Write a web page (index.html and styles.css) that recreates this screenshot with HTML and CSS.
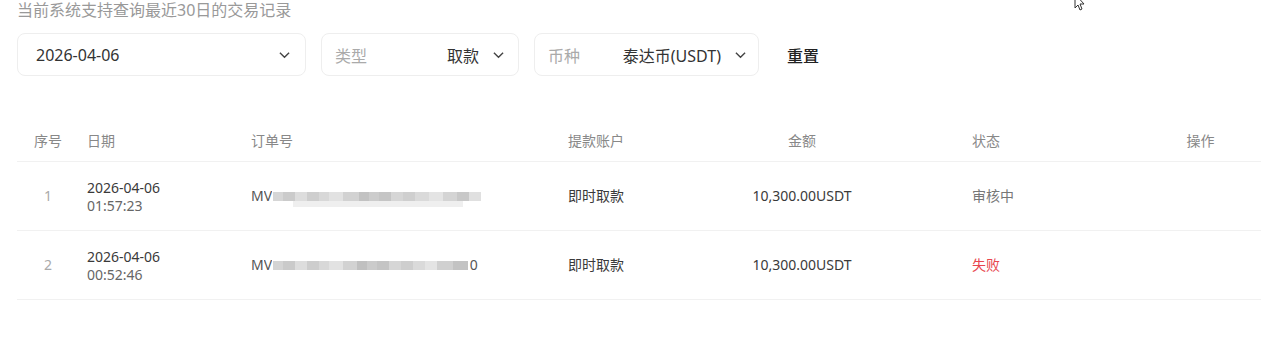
FILE: index.html
```html
<!DOCTYPE html>
<html lang="zh-CN">
<head>
  <meta charset="UTF-8" />
  <meta name="viewport" content="width=device-width, initial-scale=1" />
  <title>交易记录</title>
  <link rel="stylesheet" href="styles.css">
</head>
<body>
  <div class="page">
    <p class="tip">当前系统支持查询最近30日的交易记录</p>

    <div class="filters">
      <div class="select date-select">
        <span class="value">2026-04-06</span>
        <svg class="chev" viewBox="0 0 12 8"><path d="M1 1.5l5 5 5-5" /></svg>
      </div>
      <div class="select type-select">
        <span class="label">类型</span>
        <span class="value">取款</span>
        <svg class="chev" viewBox="0 0 12 8"><path d="M1 1.5l5 5 5-5" /></svg>
      </div>
      <div class="select coin-select">
        <span class="label">币种</span>
        <span class="value">泰达币(USDT)</span>
        <svg class="chev" viewBox="0 0 12 8"><path d="M1 1.5l5 5 5-5" /></svg>
      </div>
      <button class="reset">重置</button>
    </div>

    <div class="table">
      <div class="row head">
        <div class="c c-no">序号</div>
        <div class="c">日期</div>
        <div class="c">订单号</div>
        <div class="c">提款账户</div>
        <div class="c c-mid">金额</div>
        <div class="c">状态</div>
        <div class="c c-mid">操作</div>
      </div>

      <div class="row">
        <div class="c c-no num">1</div>
        <div class="c date">2026-04-06<span class="time">01:57:23</span></div>
        <div class="c order">M<span class="v">V</span><span class="mask mask-full"></span></div>
        <div class="c">即时取款</div>
        <div class="c c-mid">10,300.00USDT</div>
        <div class="c status">审核中</div>
        <div class="c c-mid"></div>
      </div>

      <div class="row">
        <div class="c c-no num">2</div>
        <div class="c date">2026-04-06<span class="time">00:52:46</span></div>
        <div class="c order">M<span class="v">V</span><span class="mask"></span><span class="tail">0</span></div>
        <div class="c">即时取款</div>
        <div class="c c-mid">10,300.00USDT</div>
        <div class="c status fail">失败</div>
        <div class="c c-mid"></div>
      </div>
    </div>
  </div>

  <svg class="cursor" viewBox="0 0 12 12"><path d="M1 -6 L1 8 L4 5 L6 10 L8 9 L6 4 L10 4 Z" /></svg>
</body>
</html>
```

FILE: styles.css
```css
body {
  margin: 0;
  padding: 0;
  background: #fff;
  color: #333;
  font-family: "Noto Sans", "Noto Sans CJK SC", sans-serif;
  overflow: hidden;
}
.page {
  padding-left: 17px;
}
.tip {
  margin: 0;
  font-size: 16px;
  line-height: 20px;
  color: #999;
}

/* filter bar */
.filters {
  display: flex;
  align-items: center;
  margin-top: 13px;
}
.select {
  display: flex;
  align-items: center;
  height: 43px;
  box-sizing: border-box;
  border: 1px solid #eeeeee;
  border-radius: 8px;
  font-size: 16px;
  margin-right: 15px;
}
.date-select {
  width: 289px;
  padding: 0 15px 0 18px;
}
.type-select {
  width: 198px;
  padding: 0 14px 0 13px;
}
.coin-select {
  width: 225px;
  padding: 0 12px 0 13px;
}
.select .label {
  color: #aaa;
}
.select .value {
  flex: 1;
  color: #333;
}
.type-select .value,
.coin-select .value {
  text-align: right;
  margin-right: 14px;
}
.chev {
  width: 11px;
  height: 8px;
  fill: none;
  stroke: #444;
  stroke-width: 1.5;
}
.reset {
  margin-left: 13px;
  border: none;
  background: none;
  padding: 0;
  font-family: inherit;
  font-size: 16px;
  font-weight: 500;
  color: #222;
}

/* table */
.table {
  margin-top: 44px;
}
.row {
  display: grid;
  grid-template-columns: 62px 164px 317px 80px 324px 176px 1fr;
  align-items: center;
  height: 68px;
  border-bottom: 1px solid #f1f1f1;
  font-size: 14px;
  color: #3a3a3a;
}
.row.head {
  height: 41px;
  color: #888;
}
.c {
  padding-left: 8px;
  white-space: nowrap;
  line-height: 18px;
}
.c-no,
.c-mid {
  padding-left: 0;
  text-align: center;
}
.num {
  color: #aaa;
}
.date {
  padding-top: 2px;
}
.date .time {
  display: block;
  color: #666;
}
.order {
  display: flex;
  align-items: center;
  color: #555;
}
.order .v {
  display: inline-block;
  width: 8px;
  overflow: hidden;
}
.mask {
  display: inline-block;
  width: 195px;
  height: 9px;
  margin-left: 1px;
  background: linear-gradient(90deg,
    #d4d4d4 0 10px, #cacaca 10px 22px, #dddddd 22px 34px, #cdcdcd 34px 46px,
    #d8d8d8 46px 56px, #e2e2e2 56px 70px, #d2d2d2 70px 84px, #c0c0c0 84px 94px,
    #cbcbcb 94px 104px, #c4c4c4 104px 116px, #d6d6d6 116px 128px, #cecece 128px 140px,
    #dadada 140px 152px, #e4e4e4 152px 164px, #d0d0d0 164px 180px, #c3c3c3 180px 195px);
  filter: blur(0.7px);
}
.mask-full {
  width: 208px;
  height: 15px;
  margin-top: 6px;
  background:
    linear-gradient(90deg,
      #d6d6d6 0 10px, #cbcbcb 10px 22px, #dddddd 22px 34px, #cecece 34px 46px,
      #d8d8d8 46px 56px, #e2e2e2 56px 70px, #d2d2d2 70px 86px, #c2c2c2 86px 96px,
      #cccccc 96px 106px, #c5c5c5 106px 118px, #d6d6d6 118px 130px, #cfcfcf 130px 142px,
      #dadada 142px 156px, #e4e4e4 156px 170px, #d4d4d4 170px 184px, #c8c8c8 184px 196px,
      #e0e0e0 196px 208px) top / 100% 9px no-repeat,
    linear-gradient(90deg, transparent 0 20px, #efefef 20px 190px, transparent 190px) bottom / 100% 6px no-repeat;
}
.tail {
  margin-left: 2px;
  color: #555;
}
.status {
  color: #777;
}
.status.fail {
  color: #e8464e;
}

.cursor {
  position: absolute;
  top: 0;
  left: 1074px;
  width: 12px;
  height: 12px;
  fill: #fff;
  stroke: #333;
  stroke-width: 1;
}
```
